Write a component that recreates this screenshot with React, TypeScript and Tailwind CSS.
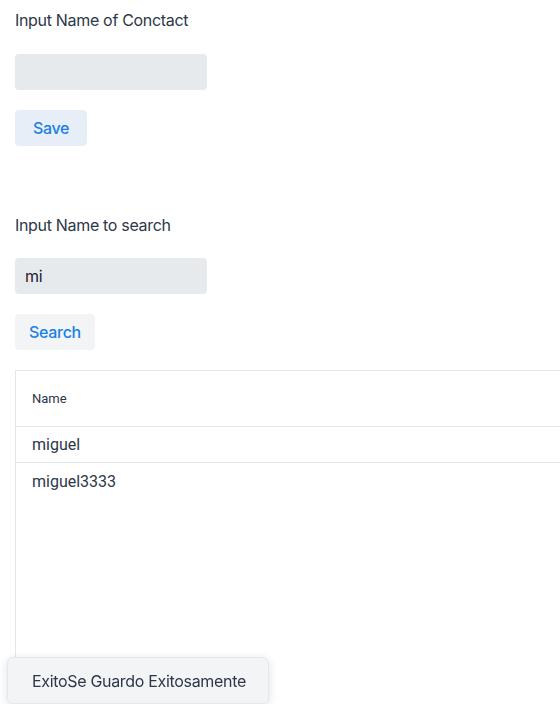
export default function App() {
  const names = ["miguel", "miguel3333"];

  return (
    <div className="h-[704px] overflow-hidden bg-white font-['Inter',sans-serif] tracking-[-0.02em] text-[#2d3748]">
      <div className="px-[15px] pt-[10px]">
        {/* Save contact */}
        <label className="block text-[16px] leading-[20px]">Input Name of Conctact</label>
        <input
          className="mt-[24px] block h-[36px] w-[192px] rounded-[4px] bg-[#e7eaed] px-[10px] text-[16px] outline-none"
          defaultValue=""
        />
        <button className="mt-[20px] block h-[36px] w-[72px] rounded-[4px] bg-[#e8eef7] text-[16px] font-medium text-[#1a7fe6]">
          Save
        </button>

        {/* Search */}
        <label className="mt-[69px] block text-[16px] leading-[20px]">Input Name to search</label>
        <input
          className="mt-[23px] block h-[36px] w-[192px] rounded-[4px] bg-[#e7eaed] px-[10px] text-[16px] text-[#1a202c] outline-none"
          defaultValue="mi"
        />
        <button className="mt-[20px] block h-[36px] w-[80px] rounded-[4px] bg-[#f3f4f6] text-[16px] font-medium text-[#1a7fe6]">
          Search
        </button>

        {/* Results */}
        <div className="mt-[20px] h-[400px] w-[600px] border border-[#e2e8f0] tracking-normal">
          <div className="flex h-[56px] items-center border-b border-[#e2e8f0] px-[16px] pt-[1px] font-['Roboto',sans-serif] text-[13px] text-[#2d3748]">
            Name
          </div>
          {names.map((n, i) => (
            <div
              key={n}
              className={
                i === 0
                  ? "flex h-[36px] items-center border-b border-[#e2e8f0] px-[16px] pt-[1px] font-['Roboto',sans-serif] text-[16px]"
                  : "flex h-[36px] items-center px-[16px] pt-[1px] font-['Roboto',sans-serif] text-[16px]"
              }
            >
              {n}
            </div>
          ))}
        </div>
      </div>

      {/* Toast */}
      <div className="fixed left-[7px] top-[657px] flex h-[47px] w-[262px] items-center whitespace-nowrap rounded-[6px] border border-[#e2e8f0] bg-[#f3f4f6] px-[24px] text-[16px] tracking-[-0.02em] text-[#2d3748] shadow-[0_2px_10px_rgba(0,0,0,0.12)]">
        ExitoSe Guardo Exitosamente
      </div>
    </div>
  );
}
